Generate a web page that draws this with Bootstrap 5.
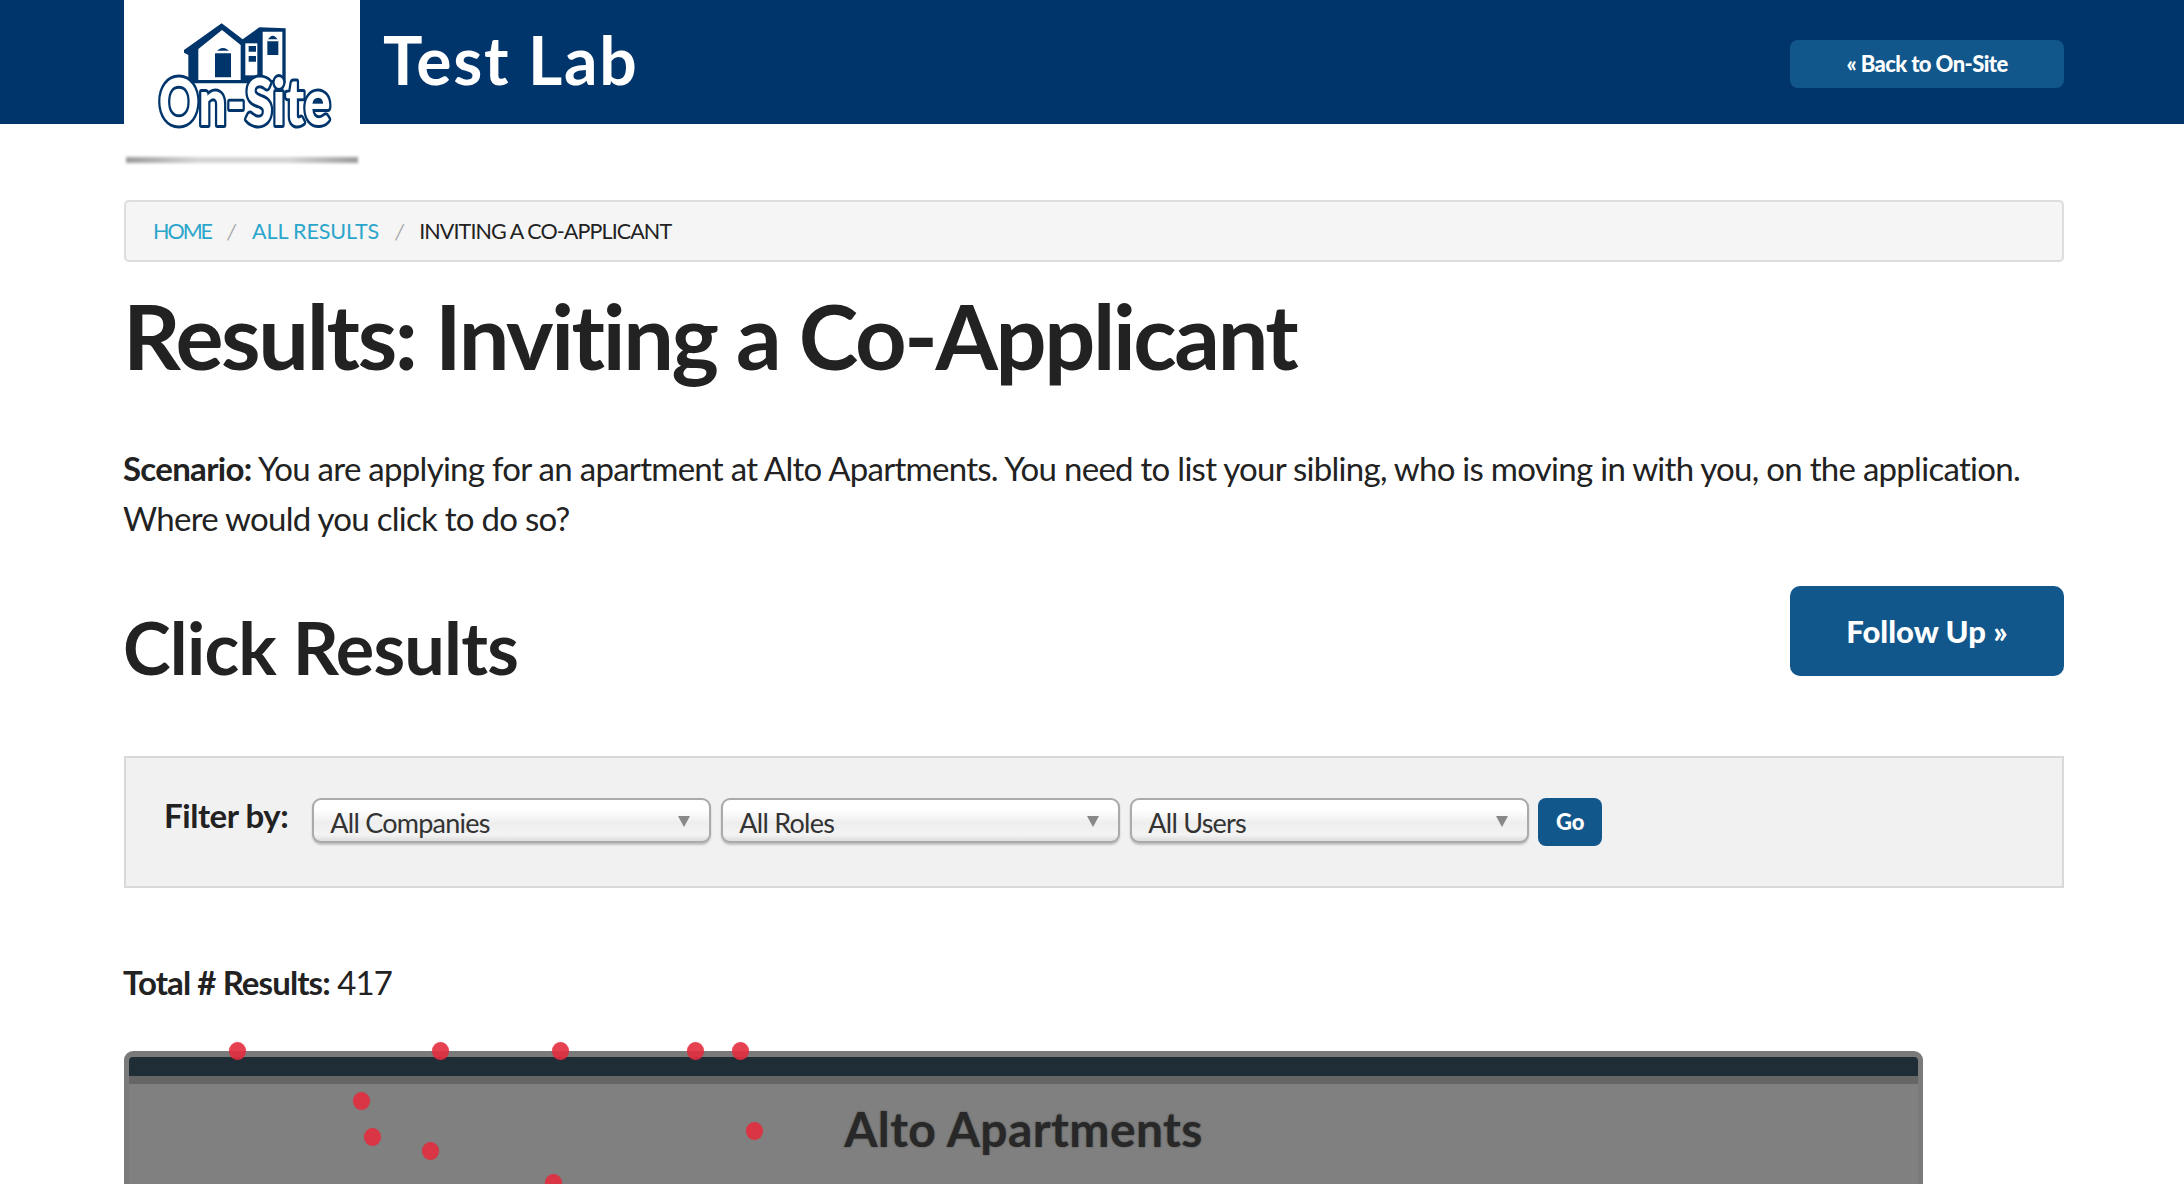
<!DOCTYPE html>
<html lang="en">
<head>
<meta charset="utf-8">
<title>Results: Inviting a Co-Applicant</title>
<link rel="stylesheet" href="https://cdn.jsdelivr.net/npm/bootstrap@5.3.0/dist/css/bootstrap.min.css">
<style>
html,body{height:100vh;overflow:hidden}
body{font-family:Lato,"Noto Sans",sans-serif;color:#222;background:#fff;font-variant-ligatures:none}
.page-wrap{width:1940px;margin:0 0 0 124px}
.site-head{height:124px;background:#00356b}
.logo-box{width:236px;height:124px;background:#fff;position:relative;flex:none}
.logo-box svg{display:block;position:absolute;left:0;top:0}
.logo-shadow{position:absolute;left:2px;right:2px;top:157px;height:6px;background:linear-gradient(90deg,#999,#d4d4d4 30%,#d4d4d4 70%,#999);filter:blur(1.5px)}
.lab-title{font-size:66px;font-weight:700;color:#fff;line-height:124px;margin:-2px 0 0 23px;letter-spacing:1.7px}
.back-btn{width:274px;height:48px;margin-top:40px;background:#11578b;border:0;border-radius:8px;color:#fff;font-size:22px;font-weight:900;line-height:48px;padding:0;letter-spacing:-.6px}
.crumbs{margin:76px 0 0;height:62px;background:#f5f5f5;border:2px solid #ddd;border-radius:5px;padding:0 27px;align-items:center;font-size:21.5px;--bs-breadcrumb-divider:'/';--bs-breadcrumb-item-padding-x:16px;--bs-breadcrumb-margin-bottom:0}
.crumbs a{color:#2ba6cb;text-decoration:none;letter-spacing:-.1px}
.crumbs .crumb-home{letter-spacing:-2px}
.crumbs .breadcrumb-item+.breadcrumb-item::before{color:#aaa;font-style:italic}
.crumbs .active{color:#222;letter-spacing:-.9px}
.main-title{font-size:90px;font-weight:700;line-height:100px;margin:23px 0 0 -1px;color:#222;letter-spacing:-2.4px}
.scenario{font-size:33px;line-height:50px;margin:58px 0 0 -1px;color:#222;letter-spacing:-.72px}
.scenario strong{letter-spacing:-.7px}
.results-row{margin-top:43px}
.click-title{font-size:72px;font-weight:700;line-height:89px;margin:17px 0 0 -1px;color:#222;letter-spacing:-.8px}
.follow-btn{width:274px;height:90px;background:#11578b;border:0;border-radius:10px;color:#fff;font-size:31px;font-weight:900;padding:0}
.filter-panel{height:132px;margin-top:64px;background:#f1f1f1;border:2px solid #d9d9d9;padding:40px 0 0 38px}
.filter-label{font-size:33px;font-weight:700;line-height:35px;margin-right:24px;color:#222;letter-spacing:-.45px}
.pick{width:399px;height:45px;margin-right:10px;padding:4px 30px 0 16px;font-size:27px;line-height:36px;letter-spacing:-.75px;color:#333;border:2px solid #aaa;border-radius:9px;box-shadow:0 2px 2px rgba(0,0,0,.2);background-color:#fff;background-image:url("data:image/svg+xml,%3Csvg xmlns='http://www.w3.org/2000/svg' width='14' height='14'%3E%3Cpath d='M1 2h12L7 13z' fill='%23888'/%3E%3C/svg%3E"),linear-gradient(#fff 25%,#eee 55%,#f3f3f3 85%,#ddd);background-repeat:no-repeat;background-position:right 18px center,0 0;background-size:14px 14px,100% 100%}
.go-btn{width:64px;height:48px;margin-left:-1px;background:#11578b;border:0;border-radius:8px;color:#fff;font-size:22px;font-weight:900;padding:0 0 2px}
.total-line{font-size:33px;line-height:50px;margin:69px 0 0 -1px;color:#222;letter-spacing:-.9px}
.mock-frame{position:relative;width:1799px;height:135px;margin-top:44px;background:#808080;border:solid #7a7a7a;border-width:6px 5px 0;border-radius:9px 9px 0 0}
.mock-bar{height:19px;background:#1f2d36;border-radius:4px 4px 0 0}
.mock-strip{height:8px;background:#666}
.mock-title{font-size:48px;font-weight:700;line-height:60px;margin:15px 0 0;color:#282828;letter-spacing:.4px;text-shadow:0 0 2px rgba(40,40,40,.6)}
.click-dot{position:absolute;width:17px;height:18px;margin:-9px 0 0 -8px;border-radius:50%;background:rgba(226,44,62,.9);box-shadow:0 0 1px rgba(226,44,62,.6)}
</style>
</head>
<body>
<header class="site-head">
  <div class="page-wrap d-flex align-items-start">
    <div class="logo-box">
      <svg width="236" height="170" viewBox="12 0 708 510" role="img" aria-label="On-Site logo">
        <path d="M305 70 368 118 418 82 497 85V250H205V165L192 158V150Z" fill="#00356b"/>
        <g fill="#fff">
          <path d="M306 90 362 135V240H235V147Z"/>
          <path d="M376 130H412V226H376Z"/>
          <path d="M428 95H487V240H428Z"/>
        </g>
        <g fill="#00356b">
          <path d="M285 232V160Q309 128 333 160V232Z"/>
          <path d="M386 138H408V155H386ZM386 168H408V185H386Z"/>
          <path d="M442 165V122Q458 92 475 122V165Z"/>
        </g>
        <path d="M285 152H333V160H285ZM442 118H475V124H442Z" fill="#fff"/>
        <text transform="translate(116 376) scale(.76 1)" font-family="Lato,sans-serif" font-weight="900" font-size="196" fill="#fff" stroke="#00356b" stroke-width="18" stroke-linejoin="round" paint-order="stroke">On-Site</text>
      </svg>
      <div class="logo-shadow"></div>
    </div>
    <div class="lab-title">Test Lab</div>
    <button type="button" class="btn back-btn ms-auto">« Back to On-Site</button>
  </div>
</header>
<main class="page-wrap">
  <nav aria-label="breadcrumb">
    <ol class="breadcrumb crumbs text-uppercase">
      <li class="breadcrumb-item"><a class="crumb-home" href="#">Home</a></li>
      <li class="breadcrumb-item"><a href="#">All Results</a></li>
      <li class="breadcrumb-item active" aria-current="page">Inviting a Co-Applicant</li>
    </ol>
  </nav>
  <h1 class="main-title">Results: Inviting a Co-Applicant</h1>
  <p class="scenario"><strong>Scenario:</strong> You are applying for an apartment at Alto Apartments. You need to list your sibling, who is moving in with you, on the application. Where would you click to do so?</p>
  <div class="results-row d-flex justify-content-between align-items-start">
    <h2 class="click-title">Click Results</h2>
    <button type="button" class="btn follow-btn">Follow Up »</button>
  </div>
  <form class="filter-panel d-flex align-items-start">
    <label class="filter-label">Filter by:</label>
    <div class="d-flex align-items-start">
      <select class="form-select pick"><option>All Companies</option></select>
      <select class="form-select pick"><option>All Roles</option></select>
      <select class="form-select pick"><option>All Users</option></select>
      <button type="button" class="btn go-btn">Go</button>
    </div>
  </form>
  <p class="total-line"><strong>Total # Results:</strong> 417</p>
  <div class="mock-frame">
    <div class="mock-bar"></div>
    <div class="mock-strip"></div>
    <h3 class="mock-title text-center">Alto Apartments</h3>
    <span class="click-dot" style="left:108px;top:-6px"></span>
    <span class="click-dot" style="left:311px;top:-6px"></span>
    <span class="click-dot" style="left:431px;top:-6px"></span>
    <span class="click-dot" style="left:566px;top:-6px"></span>
    <span class="click-dot" style="left:611px;top:-6px"></span>
    <span class="click-dot" style="left:232px;top:44px"></span>
    <span class="click-dot" style="left:243px;top:80px"></span>
    <span class="click-dot" style="left:301px;top:94px"></span>
    <span class="click-dot" style="left:625px;top:74px"></span>
    <span class="click-dot" style="left:424px;top:126px"></span>
  </div>
</main>
<script src="https://cdn.jsdelivr.net/npm/bootstrap@5.3.0/dist/js/bootstrap.bundle.min.js"></script>
</body>
</html>
